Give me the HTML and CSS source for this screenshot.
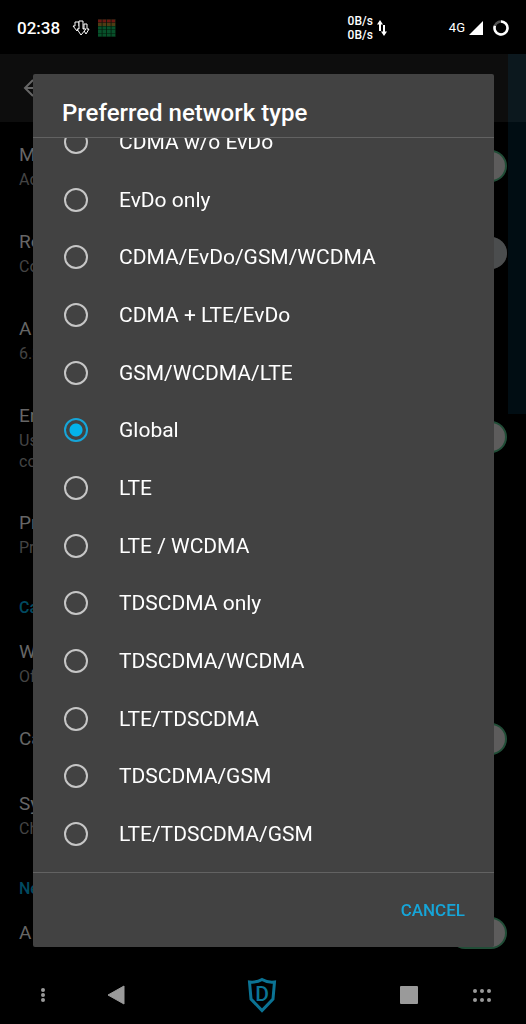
FILE: index.html
```html
<!DOCTYPE html>
<html lang="en">
<head>
    <meta charset="UTF-8">
    <meta name="viewport" content="width=device-width, initial-scale=1.0">
    <title>Mobile network</title>
    <link rel="stylesheet" href="styles.css">
</head>
<body>
    <header class="status-bar">
        <span class="clock">02:38</span>
        <svg class="download-icon" width="18" height="18" viewBox="0 0 18 18" fill="#000" stroke="#fff" stroke-width="1">
            <path d="M3 3h4v4h2L5 12 1 7h2z"/>
            <path d="M12 5h3v5h2l-3 5-3-5h1z"/>
            <path d="M7 2h4v8h3l-5 6-4-6h2z"/>
        </svg>
        <svg class="cpu-icon" width="18" height="18" viewBox="0 0 18 18">
            <rect width="18" height="18" fill="#04180b"/>
            <g stroke-width="3" stroke-dasharray="3.700 .8">
                <path d="M0 2h18" stroke="#6c1712"/>
                <path d="M0 5.500h18" stroke="#4f3c14"/>
                <path d="M0 9h18M0 12.500h18M0 16h18" stroke="#07502a"/>
            </g>
        </svg>
        <div class="net-speed">
            <div>0B/s<br>0B/s</div>
            <svg width="10" height="16" viewBox="0 0 10 16" fill="none" stroke="#fff" stroke-width="2">
                <path d="M3 11V3M7 5v8"/>
                <path d="M0 4.500L3 0l3 4.500zM4 11.500L7 16l3-4.500z" fill="#fff" stroke="none"/>
            </svg>
        </div>
        <div class="signal">
            <span>4G</span>
            <svg width="14" height="14" viewBox="0 0 14 14"><path d="M14 0v14H0z" fill="#fff"/></svg>
            <svg class="battery" width="16" height="16" viewBox="0 0 16 16" fill="none" stroke-width="2.500">
                <circle cx="8" cy="8" r="6.500" stroke="#555"/>
                <path d="M8 1.500A6.500 6.500 0 1 1 1.900 5.800" stroke="#fff"/>
            </svg>
        </div>
    </header>

    <main class="settings">
        <div class="app-bar">
            <button class="back" aria-label="Back">
                <svg width="20" height="20" viewBox="0 0 20 20" fill="none" stroke="#666" stroke-width="2"><path d="M10 2l-8 8 8 8M2 10h17"/></svg>
            </button>
        </div>
        <div class="edge"></div>
        <label class="item">
            <span class="text"><span class="name">Mobile</span><span class="note">Access</span></span>
            <input type="checkbox" class="switch" checked>
        </label>
        <label class="item">
            <span class="text"><span class="name">Roaming</span><span class="note">Connect</span></span>
            <input type="checkbox" class="switch">
        </label>
        <div class="item">
            <span class="text"><span class="name">A</span><span class="note">6.35 GB</span></span>
        </div>
        <label class="item long">
            <span class="text"><span class="name">Enhanced</span><span class="note">Use LTE<br>connection</span></span>
            <input type="checkbox" class="switch" checked>
        </label>
        <div class="item">
            <span class="text"><span class="name">Preferred</span><span class="note">Preferred</span></span>
        </div>
        <h2 class="category">Calling</h2>
        <div class="item">
            <span class="text"><span class="name">Wi-Fi</span><span class="note">Off</span></span>
        </div>
        <label class="item short">
            <span class="text"><span class="name">Carrier</span></span>
            <input type="checkbox" class="switch" checked>
        </label>
        <div class="item">
            <span class="text"><span class="name">System</span><span class="note">Change</span></span>
        </div>
        <h2 class="category">Network</h2>
        <label class="item short">
            <span class="text"><span class="name">A</span></span>
            <input type="checkbox" class="switch" checked>
        </label>
    </main>

    <nav class="nav-bar">
        <button aria-label="Menu">
            <svg width="6" height="16" viewBox="0 0 6 16" fill="#9a9a9a"><circle cx="3" cy="3" r="2"/><circle cx="3" cy="8" r="2"/><circle cx="3" cy="13" r="2"/></svg>
        </button>
        <button aria-label="Back">
            <svg width="18" height="20" viewBox="0 0 18 20"><path d="M17 1v18L1 10z" fill="#9a9a9a" stroke="#9a9a9a" stroke-linejoin="round"/></svg>
        </button>
        <button aria-label="Home">
            <svg width="30" height="38" viewBox="0 0 30 38">
                <path d="M15 3.500Q9.500 6.800 2.500 6L4 23 15 34.500 26 23 27.500 6Q20.500 6.800 15 3.500z" fill="none" stroke="#0b7394" stroke-width="3"/>
                <text class="shield-letter" x="15" y="25" text-anchor="middle">D</text>
            </svg>
        </button>
        <button aria-label="Recent apps">
            <svg width="18" height="18" viewBox="0 0 18 18"><rect width="18" height="18" rx="1" fill="#9a9a9a"/></svg>
        </button>
        <button aria-label="Apps">
            <svg width="18" height="14" viewBox="0 0 18 14" fill="#9a9a9a">
                <circle cx="2" cy="3" r="2"/><circle cx="9" cy="3" r="2"/><circle cx="16" cy="3" r="2"/>
                <circle cx="2" cy="12" r="2"/><circle cx="9" cy="12" r="2"/><circle cx="16" cy="12" r="2"/>
            </svg>
        </button>
    </nav>

    <div class="overlay">
        <form class="dialog" role="dialog" aria-labelledby="dialogTitle">
            <h1 id="dialogTitle">Preferred network type</h1>
            <div class="options">
                <div class="option-list">
                    <label><input type="radio" name="network"> CDMA w/o EvDo</label>
                    <label><input type="radio" name="network"> EvDo only</label>
                    <label><input type="radio" name="network"> CDMA/EvDo/GSM/WCDMA</label>
                    <label><input type="radio" name="network"> CDMA + LTE/EvDo</label>
                    <label><input type="radio" name="network"> GSM/WCDMA/LTE</label>
                    <label><input type="radio" name="network" checked> Global</label>
                    <label><input type="radio" name="network"> LTE</label>
                    <label><input type="radio" name="network"> LTE / WCDMA</label>
                    <label><input type="radio" name="network"> TDSCDMA only</label>
                    <label><input type="radio" name="network"> TDSCDMA/WCDMA</label>
                    <label><input type="radio" name="network"> LTE/TDSCDMA</label>
                    <label><input type="radio" name="network"> TDSCDMA/GSM</label>
                    <label><input type="radio" name="network"> LTE/TDSCDMA/GSM</label>
                </div>
            </div>
            <div class="actions">
                <button type="button">CANCEL</button>
            </div>
        </form>
    </div>
</body>
</html>
```
FILE: styles.css
```css
* {
    box-sizing: border-box;
}
body {
    margin: 0;
    height: 100vh;
    display: flex;
    flex-direction: column;
    overflow: hidden;
    background: #000;
    color: #fff;
    font-family: Roboto, sans-serif;
}
button {
    display: flex;
    align-items: center;
    justify-content: center;
    padding: 0;
    border: none;
    background: none;
    font-family: inherit;
    cursor: pointer;
}
svg {
    display: block;
    flex: none;
}

/* status bar */
.status-bar {
    flex: none;
    height: 54px;
    padding: 1px 17px 0;
    display: flex;
    align-items: center;
}
.clock {
    font-size: 17px;
    font-weight: 500;
}
.download-icon {
    margin-left: 12px;
}
.cpu-icon {
    margin-left: 8px;
}
.net-speed {
    display: flex;
    align-items: center;
    gap: 4px;
    margin-left: auto;
    margin-right: 62px;
    font-size: 12px;
    font-weight: 500;
    line-height: 14px;
}
.signal {
    display: flex;
    align-items: center;
    gap: 4px;
    font-size: 13px;
}
.battery {
    margin-left: 6px;
}

/* settings page */
.settings {
    position: relative;
    flex: 1;
    min-height: 0;
    overflow: hidden;
}
.app-bar {
    height: 68px;
    padding-left: 23px;
    display: flex;
    align-items: center;
    background: #0d0d0d;
}
.edge {
    position: absolute;
    top: 0;
    right: 0;
    width: 18px;
    height: 360px;
    background: rgba(10, 90, 130, 0.15);
}
.item {
    height: 87px;
    padding: 0 19px;
    display: flex;
    align-items: center;
    justify-content: space-between;
}
.item.long {
    height: 107px;
}
.item.short {
    height: 65px;
}
.name,
.note {
    display: block;
}
.name {
    font-size: 19px;
    line-height: 28px;
    color: #666;
}
.note {
    font-size: 16px;
    line-height: 21px;
    color: #444;
}
.category {
    height: 42px;
    margin: 0;
    padding: 20px 19px 0;
    font-size: 16px;
    font-weight: 500;
    line-height: 21px;
    color: #004a61;
}
.switch {
    appearance: none;
    display: flex;
    justify-content: flex-end;
    width: 58px;
    height: 32px;
    margin: 0;
    border-radius: 16px;
    background: #222;
}
.switch::before {
    content: "";
    width: 32px;
    height: 32px;
    border-radius: 50%;
    background: #4b4d4e;
}
.switch:checked {
    padding: 2px;
    background: #214d37;
}
.switch:checked::before {
    width: 28px;
    height: 28px;
    background: #5d5c5c;
}

/* navigation bar */
.nav-bar {
    flex: none;
    height: 58px;
    padding: 0 7px 0 6px;
    display: grid;
    grid-template-columns: 1fr 1fr 3fr 1fr 1fr;
}
.shield-letter {
    font-size: 21px;
    font-weight: 500;
    fill: #0b7394;
}

/* dialog */
.overlay {
    position: fixed;
    inset: 0;
    padding: 74px 32px 77px 33px;
    display: flex;
}
.dialog {
    flex: 1;
    display: flex;
    flex-direction: column;
    border-radius: 2px;
    background: #424242;
}
.dialog h1 {
    margin: 0;
    padding: 24px 29px 9px;
    border-bottom: 1px solid #626262;
    font-size: 24px;
    font-weight: 500;
    line-height: 30px;
}
.options {
    flex: 1;
    min-height: 0;
    display: flex;
    align-items: flex-end;
    overflow: hidden;
}
.option-list {
    flex: 1;
    height: calc(100% + 25px);
    padding-bottom: 9px;
    display: flex;
    flex-direction: column;
}
.option-list label {
    flex: 1;
    padding-left: 31px;
    display: flex;
    align-items: center;
    gap: 31px;
    font-size: 21px;
    cursor: pointer;
}
.option-list input {
    appearance: none;
    width: 24px;
    height: 24px;
    margin: 0;
    border: 2px solid #c6c6c6;
    border-radius: 50%;
}
.option-list input:checked {
    border-color: #16a5d8;
    background: radial-gradient(circle, #03b3ea 6px, transparent 7px);
}
.actions {
    height: 75px;
    padding-right: 29px;
    display: flex;
    align-items: center;
    justify-content: flex-end;
    border-top: 1px solid #626262;
}
.actions button {
    font-size: 17px;
    font-weight: 500;
    color: #16a5d8;
}
```
